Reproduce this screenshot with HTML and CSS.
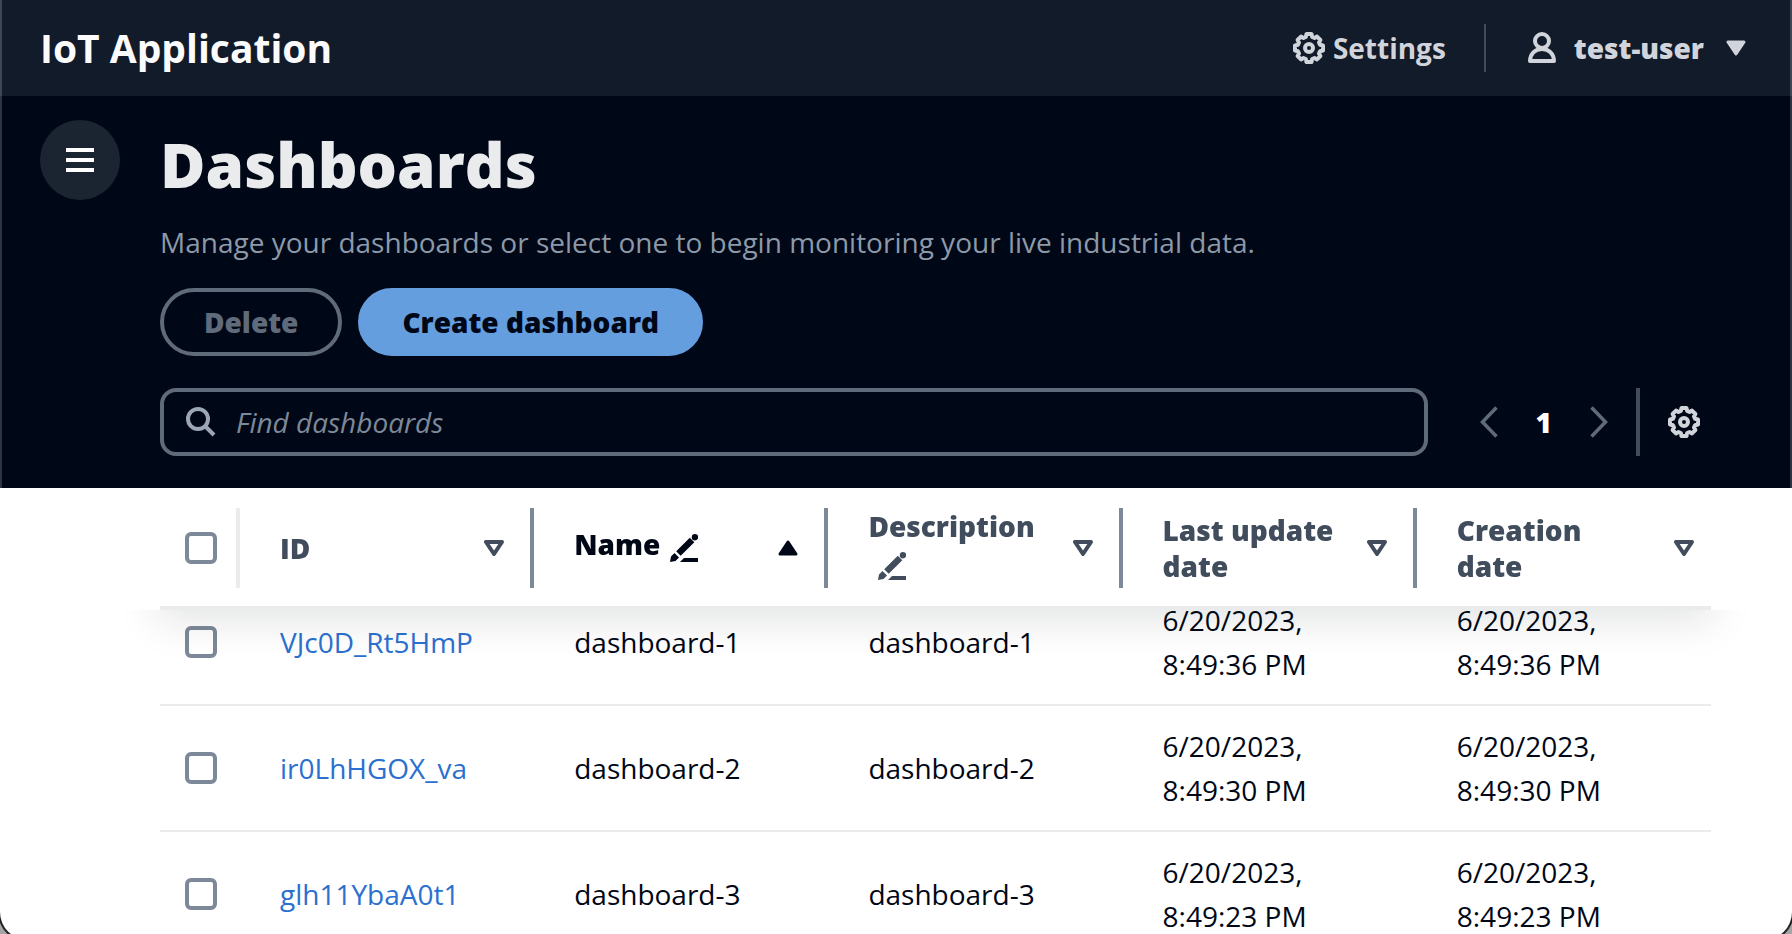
FILE: index.html
```html
<!DOCTYPE html>
<html lang="en">
<head>
<meta charset="utf-8">
<title>IoT Application</title>
<link rel="stylesheet" href="styles.css">
</head>
<body>
<svg class="sprite" aria-hidden="true">
  <symbol id="gear" viewBox="0 0 32 32">
    <path d="M13.500 2h5l.7 3 2.300 1 2.500-1.400 3.400 3.400-1.400 2.500 1 2.300 3 .7v5l-3 .7-1 2.300 1.400 2.500-3.400 3.400-2.500-1.400-2.300 1-.7 3h-5l-.7-3-2.300-1-2.500 1.400-3.400-3.400 1.400-2.500-1-2.300-3-.7v-5l3-.7 1-2.300-1.400-2.500 3.400-3.400 2.500 1.400 2.300-1z" fill="none" stroke="currentColor" stroke-width="4" stroke-linejoin="round"/>
    <circle cx="16" cy="16" r="4" fill="none" stroke="currentColor" stroke-width="4"/>
  </symbol>
  <symbol id="sort" viewBox="0 0 20 16">
    <path d="M2 2h16l-8 12z" fill="none" stroke="currentColor" stroke-width="4" stroke-linejoin="round"/>
  </symbol>
  <symbol id="pencil" viewBox="0 0 28 28">
    <path d="M0 28l1-5.500 3.500-3.500 4.500 4.500-3.500 3.500zM6.200 17.300L19.800 3.800l4.500 4.500L10.700 21.800zM14 24h14v4H10z" fill="currentColor"/>
    <circle cx="25" cy="3.200" r="3.200" fill="currentColor"/>
  </symbol>
</svg>
<header class="topbar">
  <a class="brand" href="#">IoT Application</a>
  <nav class="utilities">
    <button class="utility" type="button"><svg class="icon32"><use href="#gear"/></svg>Settings</button>
    <button class="utility user" type="button">
      <svg class="icon-user" viewBox="0 0 28 32"><circle cx="14" cy="9" r="7" fill="none" stroke="currentColor" stroke-width="4"/><path d="M2 29c0-7 5-12 12-12s12 5 12 12z" fill="none" stroke="currentColor" stroke-width="4" stroke-linejoin="round"/></svg>
      test-user
      <svg class="sort" viewBox="0 0 20 16"><path d="M2 2h16l-8 12z" fill="currentColor" stroke="currentColor" stroke-width="3" stroke-linejoin="round"/></svg>
    </button>
  </nav>
</header>
<main class="page">
  <section class="hero">
    <button class="menu" type="button" aria-label="Open navigation"><svg class="icon-menu" viewBox="0 0 28 24"><path d="M0 2h28M0 12h28M0 22h28" stroke="currentColor" stroke-width="4"/></svg></button>
    <div class="hero-body">
      <h1>Dashboards</h1>
      <p>Manage your dashboards or select one to begin monitoring your live industrial data.</p>
      <div class="actions">
        <button class="btn" type="button" disabled>Delete</button>
        <button class="btn primary" type="button">Create dashboard</button>
      </div>
      <div class="tools">
        <label class="search">
          <svg class="icon-search" viewBox="0 0 30 30"><circle cx="12" cy="12" r="10" fill="none" stroke="currentColor" stroke-width="4"/><path d="M19 19l9 9" stroke="currentColor" stroke-width="4"/></svg>
          <input type="search" placeholder="Find dashboards" aria-label="Find dashboards">
        </label>
        <div class="pager">
          <button type="button" aria-label="Previous page" disabled><svg class="chevron" viewBox="0 0 18 32"><path d="M16.500 1.500L2.500 16l14 14.500" fill="none" stroke="currentColor" stroke-width="3.500"/></svg></button>
          <button class="current" type="button">1</button>
          <button type="button" aria-label="Next page" disabled><svg class="chevron" viewBox="0 0 18 32"><path d="M1.500 1.500l14 14.500-14 14.500" fill="none" stroke="currentColor" stroke-width="3.500"/></svg></button>
        </div>
        <button class="prefs" type="button" aria-label="Preferences"><svg class="icon32"><use href="#gear"/></svg></button>
      </div>
    </div>
  </section>
  <div class="table-scroll" id="table-scroll">
    <table>
      <colgroup><col class="select-col"><col><col><col><col><col></colgroup>
      <thead>
        <tr>
          <th class="select"><div class="head"><input type="checkbox" aria-label="Select all"></div></th>
          <th><div class="head"><span>ID</span><svg class="sort"><use href="#sort"/></svg></div></th>
          <th class="sorted"><div class="head"><span>Name<svg class="pencil"><use href="#pencil"/></svg></span><svg class="sort" viewBox="0 0 20 16"><path d="M2 14h16l-8-12z" fill="currentColor" stroke="currentColor" stroke-width="3" stroke-linejoin="round"/></svg></div></th>
          <th><div class="head"><span>Description<svg class="pencil"><use href="#pencil"/></svg></span><svg class="sort"><use href="#sort"/></svg></div></th>
          <th><div class="head"><span>Last update date</span><svg class="sort"><use href="#sort"/></svg></div></th>
          <th><div class="head"><span>Creation date</span><svg class="sort"><use href="#sort"/></svg></div></th>
        </tr>
      </thead>
      <tbody>
        <tr><td class="select"><input type="checkbox" aria-label="Select dashboard-1"></td><td><a href="#">VJc0D_Rt5HmP</a></td><td>dashboard-1</td><td>dashboard-1</td><td>6/20/2023, 8:49:36 PM</td><td>6/20/2023, 8:49:36 PM</td></tr>
        <tr><td class="select"><input type="checkbox" aria-label="Select dashboard-2"></td><td><a href="#">ir0LhHGOX_va</a></td><td>dashboard-2</td><td>dashboard-2</td><td>6/20/2023, 8:49:30 PM</td><td>6/20/2023, 8:49:30 PM</td></tr>
        <tr><td class="select"><input type="checkbox" aria-label="Select dashboard-3"></td><td><a href="#">glh11YbaA0t1</a></td><td>dashboard-3</td><td>dashboard-3</td><td>6/20/2023, 8:49:23 PM</td><td>6/20/2023, 8:49:23 PM</td></tr>
      </tbody>
    </table>
  </div>
</main>
<script src="script.js"></script>
</body>
</html>
```
FILE: styles.css
```css
* { box-sizing: border-box; }

html { height: 100%; overflow: hidden; background: #a5a5a5; }

body {
  margin: 0;
  height: calc(100vh + 6px);
  display: flex;
  flex-direction: column;
  overflow: hidden;
  background: #fff;
  border-radius: 0 0 28px 28px;
  box-shadow: 0 0 0 2px #222;
  color: #000716;
  font: 400 28px/44px "Open Sans", "Noto Sans", sans-serif;
}

button, input { font: inherit; color: inherit; margin: 0; }
button { background: none; border: 0; padding: 0; }
svg { display: block; flex: none; }
.sprite { position: absolute; width: 0; height: 0; }

.icon32 { width: 32px; height: 32px; }
.icon-user { width: 28px; height: 32px; }
.icon-menu { width: 28px; height: 24px; }
.icon-search { width: 30px; height: 30px; }
.chevron { width: 18px; height: 32px; }
.sort { width: 20px; height: 16px; }

.topbar {
  display: flex;
  align-items: center;
  justify-content: space-between;
  height: 96px;
  padding: 0 44px 0 38px;
  background: #121b29;
  border: solid #3f4650;
  border-width: 0 2px;
}
.brand { color: #fbfbfb; font-size: 39px; font-weight: 700; text-decoration: none; }
.utilities { display: flex; align-items: center; }
.utility { display: flex; align-items: center; gap: 8px; color: #d1d5db; font-weight: 700; }
.user { gap: 18px; height: 48px; margin-left: 38px; padding-left: 42px; border-left: 2px solid #414d5c; font-weight: 800; }
.user .sort { margin-left: 4px; }

.page { flex: 1; min-height: 0; display: flex; flex-direction: column; }
.hero {
  display: flex;
  gap: 40px;
  padding: 24px 78px 32px 38px;
  background: #000716;
  border: solid #30343f;
  border-width: 0 2px;
}
.menu {
  flex: none;
  display: grid;
  place-items: center;
  width: 80px;
  height: 80px;
  border-radius: 50%;
  background: #1b2532;
  color: #fff;
}
.hero-body { flex: 1; min-width: 0; }
h1 { margin: 0; color: #e9ebed; font-size: 62px; line-height: 88px; font-weight: 800; }
p { margin: 12px 0 24px; color: #8d99a8; }

.actions { display: flex; gap: 16px; margin-bottom: 32px; }
.btn {
  height: 68px;
  padding: 0 40px;
  border: 4px solid #5f6b7a;
  border-radius: 34px;
  color: #5f6b7a;
  font-weight: 800;
}
.btn.primary { background: #659ede; border-color: #659ede; color: #000716; }

.tools { display: flex; align-items: center; }
.search {
  flex: 1;
  display: flex;
  align-items: center;
  gap: 20px;
  height: 68px;
  padding: 0 22px;
  border: 4px solid #5f6b7a;
  border-radius: 16px;
  color: #9ba7b6;
}
.search input { flex: 1; min-width: 0; padding: 0; border: 0; outline: 0; background: none; color: #fff; }
.search input::placeholder { color: #7d8998; font-style: italic; opacity: 1; }
.pager { display: flex; align-items: center; gap: 38px; margin: 0 28px 0 52px; color: #5f6b7a; }
.pager .current { color: #fff; font-weight: 800; }
.prefs {
  display: flex;
  align-items: center;
  height: 68px;
  padding: 0 12px 0 28px;
  border-left: 4px solid #414d5c;
  color: #d1d5db;
}

.table-scroll {
  flex: 1;
  min-height: 0;
  overflow: auto;
  scrollbar-width: none;
  padding: 0 81px 0 160px;
}
table { width: 100%; table-layout: fixed; border-collapse: separate; border-spacing: 0; }
.select-col { width: 80px; }
thead {
  position: sticky;
  top: 0;
  z-index: 1;
  background: #fff;
  box-shadow: 0 8px 40px 2px rgba(0, 28, 16, 0.12);
  /* Keep the shadow below the header only. */
  clip-path: polygon(0 0, 100% 0, 100% 100%, calc(100% + 80px) 100%, calc(100% + 80px) calc(100% + 80px), -80px calc(100% + 80px), -80px 100%, 0 100%);
}
th {
  height: 122px;
  padding: 16px 0 14px;
  border-bottom: 4px solid #e9ebed;
  color: #414d5c;
  font-weight: 800;
  line-height: 36px;
  text-align: left;
}
th.sorted { color: #000716; }
.head {
  display: flex;
  align-items: center;
  justify-content: space-between;
  gap: 24px;
  height: 80px;
  padding: 0 26px 0 40px;
  border-right: 4px solid #7d8998;
}
th.select .head { border-color: #e9ebed; }
th:last-child .head { border: 0; padding-right: 17px; }
.pencil { display: inline-block; width: 28px; height: 28px; margin: 0 0 8px 10px; vertical-align: -15px; }
td { padding: 18px 28px 18px 40px; border-bottom: 2px solid #e9ebed; vertical-align: middle; }
td.select, th.select .head { padding: 0 0 0 25px; }
td a { color: #2c70cf; text-decoration: none; }
input[type="checkbox"] {
  appearance: none;
  display: block;
  width: 32px;
  height: 32px;
  border: 4px solid #7d8998;
  border-radius: 6px;
  background: #fff;
}
```
FILE: script.js
```js
// Start slightly scrolled so the first row slides under the sticky header.
document.getElementById('table-scroll').scrollTop = 30;
```
